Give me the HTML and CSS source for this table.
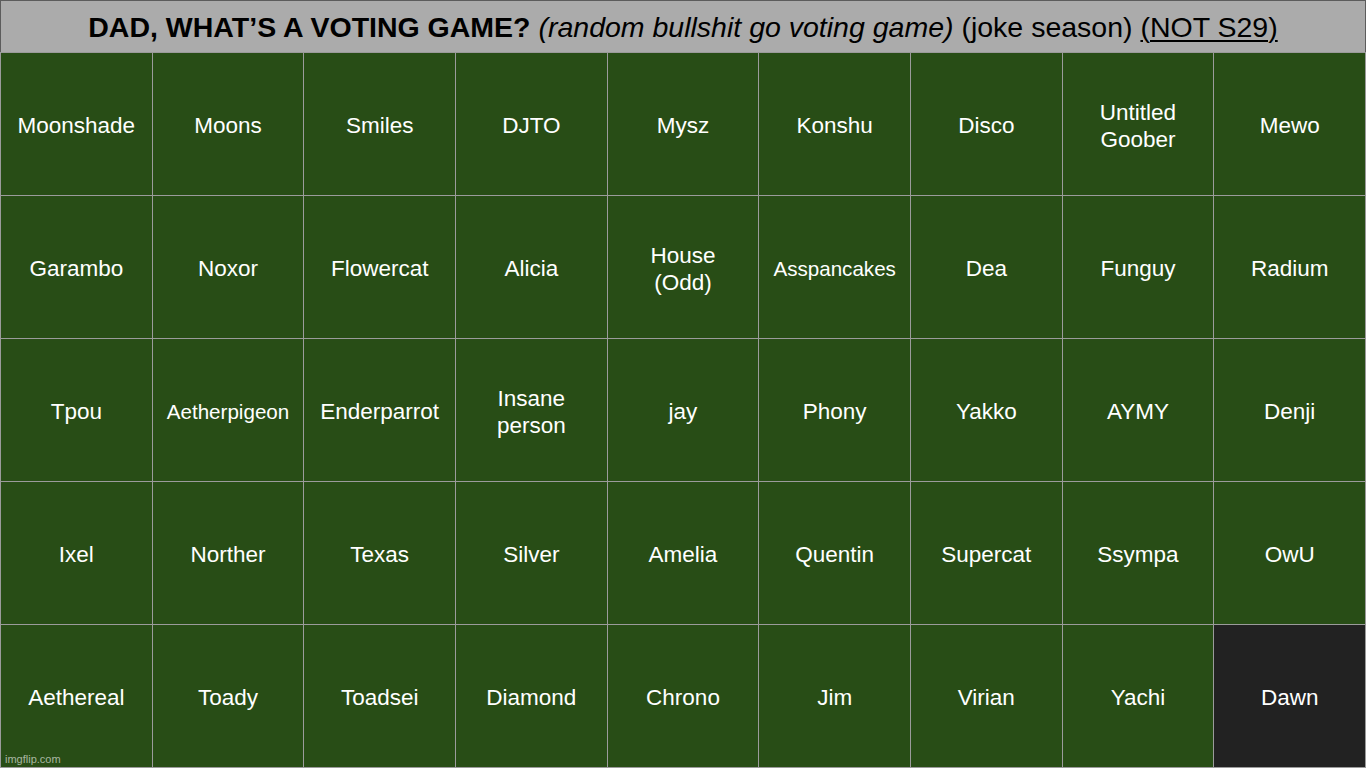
FILE: index.html
```html
<!DOCTYPE html>
<html>
<head>
<meta charset="utf-8">
<link rel="stylesheet" href="styles.css">
</head>
<body>
<div class="board">
  <div class="title"><span class="title-text"><b>DAD, WHAT’S A VOTING GAME?</b> <i>(random bullshit go voting game)</i> (joke season) <u>(NOT S29)</u></span></div>
  <div class="grid">
    <div class="cell">Moonshade</div>
    <div class="cell">Moons</div>
    <div class="cell">Smiles</div>
    <div class="cell">DJTO</div>
    <div class="cell">Mysz</div>
    <div class="cell">Konshu</div>
    <div class="cell">Disco</div>
    <div class="cell">Untitled Goober</div>
    <div class="cell">Mewo</div>

    <div class="cell">Garambo</div>
    <div class="cell">Noxor</div>
    <div class="cell">Flowercat</div>
    <div class="cell">Alicia</div>
    <div class="cell">House (Odd)</div>
    <div class="cell small">Asspancakes</div>
    <div class="cell">Dea</div>
    <div class="cell">Funguy</div>
    <div class="cell">Radium</div>

    <div class="cell">Tpou</div>
    <div class="cell small">Aetherpigeon</div>
    <div class="cell">Enderparrot</div>
    <div class="cell">Insane person</div>
    <div class="cell">jay</div>
    <div class="cell">Phony</div>
    <div class="cell">Yakko</div>
    <div class="cell">AYMY</div>
    <div class="cell">Denji</div>

    <div class="cell">Ixel</div>
    <div class="cell">Norther</div>
    <div class="cell">Texas</div>
    <div class="cell">Silver</div>
    <div class="cell">Amelia</div>
    <div class="cell">Quentin</div>
    <div class="cell">Supercat</div>
    <div class="cell">Ssympa</div>
    <div class="cell">OwU</div>

    <div class="cell">Aethereal</div>
    <div class="cell">Toady</div>
    <div class="cell">Toadsei</div>
    <div class="cell">Diamond</div>
    <div class="cell">Chrono</div>
    <div class="cell">Jim</div>
    <div class="cell">Virian</div>
    <div class="cell">Yachi</div>
    <div class="cell out">Dawn</div>
  </div>
  <div class="watermark">imgflip.com</div>
</div>
</body>
</html>
```

FILE: styles.css
```css
html, body {
  margin: 0;
  padding: 0;
  background: #ffffff;
}

.board {
  position: relative;
  width: 1366px;
  height: 768px;
  overflow: hidden;
  font-family: "Liberation Sans", Arial, sans-serif;
  display: flex;
  flex-direction: column;
}

.title {
  height: 52px;
  box-sizing: border-box;
  border: 1px solid #5c5c5c;
  border-bottom: none;
  background: #ababab;
  color: #000;
  font-size: 28.5px;
  display: flex;
  align-items: center;
  justify-content: center;
  padding-top: 1px;
}

.title-text {
  white-space: nowrap;
}

.title b { font-weight: bold; }
.title u { text-decoration-thickness: 2px; text-underline-offset: 3px; }

.grid {
  flex: 1;
  display: grid;
  grid-template-columns: repeat(9, 1fr);
  grid-template-rows: repeat(5, 1fr);
  gap: 1px;
  padding: 1px;
  background: #9b9b9b;
}

.cell {
  background: #284d16;
  color: #ffffff;
  font-size: 22.5px;
  line-height: 27px;
  display: flex;
  align-items: center;
  justify-content: center;
  text-align: center;
  padding: 3px 12px 0;
}

.cell.small {
  font-size: 20.6px;
  padding: 3px 2px 0;
}

.cell.out {
  background: #222222;
}

.watermark {
  position: absolute;
  left: 5px;
  bottom: 3px;
  font-size: 11px;
  color: rgba(255, 255, 255, 0.6);
}
```
